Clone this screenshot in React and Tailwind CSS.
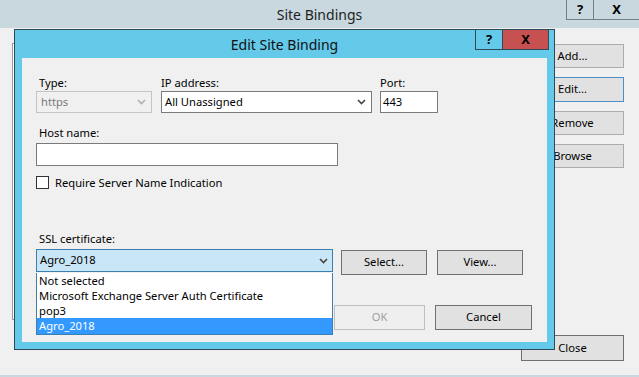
import React from "react";

function Chevron({ color = "#333" }) {
  return (
    <svg width="9" height="6" viewBox="0 0 9 6">
      <path d="M1 1 L4.5 4.5 L8 1" fill="none" stroke={color} strokeWidth="1.6" />
    </svg>
  );
}

function WinBtn({ children, className = "" }) {
  return (
    <div className={"h-[24px] w-full flex items-center justify-center border bg-[#e1e1e1] " + className}>
      {children}
    </div>
  );
}

export default function App() {
  return (
    <div className="relative w-[639px] h-[377px] overflow-hidden bg-[#f0f0f0] font-['Noto_Sans',sans-serif] text-[11.2px] text-black flex flex-col">
      {/* Outer title bar */}
      <div className="h-[28px] shrink-0 bg-[#c8d8de] flex">
        <div className="w-[73px]" />
        <div className="flex-1 flex items-center justify-center text-[14px] text-[#222] pt-[1px]">Site Bindings</div>
        <div className="flex h-[20px] w-[73px]">
          <div className="w-[28px] h-full border-l border-b border-r border-[#6f8088] flex items-center justify-center font-bold text-[13px]">?</div>
          <div className="flex-1 h-full border-b border-[#6f8088] flex items-center justify-center font-bold text-[13px]">X</div>
        </div>
      </div>

      {/* Outer body */}
      <div className="flex-1 flex pl-[12px] pt-[15px] pb-[14px]">
        <div className="w-[498px] h-[277px] border border-[#9a9a9a] bg-white" />
        <div className="ml-[11px] w-[103px] flex flex-col pt-[1px]">
          <div className="flex flex-col gap-[9px]">
            <WinBtn className="border-[#adadad]">Add...</WinBtn>
            <WinBtn className="border-[#4f8dc6] h-[25px]">Edit...</WinBtn>
            <WinBtn className="border-[#adadad]">Remove</WinBtn>
            <WinBtn className="border-[#adadad]">Browse</WinBtn>
          </div>
          <div className="mt-auto">
            <WinBtn className="border-[#707070] h-[26px]">Close</WinBtn>
          </div>
        </div>
      </div>
      <div className="h-[2px] shrink-0 bg-[#c8d8de]" />

      {/* Edit Site Binding dialog */}
      <div className="absolute left-[14px] top-[29px] w-[541px] h-[321px] border border-[#2c4a58] bg-[#65c9ea] flex flex-col pb-[7px]">
        <div className="h-[28px] shrink-0 flex">
          <div className="w-[79px]" />
          <div className="flex-1 flex items-center justify-center text-[14px] text-[#111] pt-[1px]">Edit Site Binding</div>
          <div className="w-[74px] mr-[5px] -mt-[1px] h-[21px] flex">
            <div className="w-[28px] h-full border border-[#2c4a58] flex items-center justify-center font-bold text-[13px]">?</div>
            <div className="flex-1 h-full border-t border-r border-b border-[#2c4a58] bg-[#c75050] flex items-center justify-center font-bold text-[13px]">X</div>
          </div>
        </div>

        <div className="relative flex-1 mx-[7px] bg-[#f0f0f0] pl-[14px] pt-[17px] flex flex-col">
          {/* Row 1 */}
          <div className="flex">
            <div className="w-[116px] flex flex-col">
              <span className="ml-[3px] h-[15px] leading-[15px]">Type:</span>
              <div className="mt-[1px] h-[22px] border border-[#c4c4c4] bg-[#f0f0f0] flex items-center pl-[4px] pr-[5px] text-[#7a7a7a]">
                <span className="flex-1">https</span>
                <Chevron color="#b0b0b0" />
              </div>
            </div>
            <div className="ml-[9px] w-[211px] flex flex-col">
              <span className="h-[15px] leading-[15px]">IP address:</span>
              <div className="mt-[1px] h-[22px] border border-[#7a7a7a] bg-white flex items-center pl-[3px] pr-[5px]">
                <span className="flex-1">All Unassigned</span>
                <Chevron color="#444" />
              </div>
            </div>
            <div className="ml-[8px] w-[58px] flex flex-col">
              <span className="h-[15px] leading-[15px]">Port:</span>
              <div className="mt-[1px] h-[22px] border border-[#7a7a7a] bg-white flex items-center pl-[2px]">443</div>
            </div>
          </div>

          {/* Host name */}
          <span className="mt-[12px] ml-[3px] h-[15px] leading-[15px]">Host name:</span>
          <div className="mt-[3px] w-[302px] h-[23px] border border-[#7a7a7a] bg-white" />

          {/* Checkbox */}
          <div className="mt-[10px] flex items-center h-[13px]">
            <div className="w-[13px] h-[13px] border border-[#333] bg-white" />
            <span className="ml-[6px] leading-[15px]">Require Server Name Indication</span>
          </div>

          {/* SSL */}
          <span className="mt-[42px] ml-[3px] h-[15px] leading-[15px]">SSL certificate:</span>
          <div className="mt-[3px] flex items-start">
            <div className="w-[297px] h-[23px] border border-[#3c7fb1] bg-[#c9e6f7] flex items-center pl-[3px] pr-[4px]">
              <span className="flex-1">Agro_2018</span>
              <Chevron color="#444" />
            </div>
            <div className="ml-[8px] mt-[1px] w-[86px] h-[25px] border border-[#707070] bg-[#e1e1e1] flex items-center justify-center">Select...</div>
            <div className="ml-[10px] mt-[1px] w-[86px] h-[25px] border border-[#707070] bg-[#e1e1e1] flex items-center justify-center">View...</div>
          </div>

          {/* OK / Cancel */}
          <div className="mt-[30px] flex justify-end pr-[15px]">
            <div className="w-[91px] h-[25px] border border-[#bfbfbf] bg-[#efefef] text-[#a0a0a0] flex items-center justify-center">OK</div>
            <div className="ml-[10px] w-[97px] h-[25px] border border-[#707070] bg-[#e1e1e1] flex items-center justify-center">Cancel</div>
          </div>

          {/* Dropdown list (overlay) */}
          <div className="absolute left-[14px] top-[215px] w-[297px] h-[62px] bg-white border-l border-r border-b border-[#3c7fb1] flex flex-col">
            <div className="h-[15px] leading-[15px] pl-[2px]">Not selected</div>
            <div className="h-[15px] leading-[15px] pl-[2px]">Microsoft Exchange Server Auth Certificate</div>
            <div className="h-[15px] leading-[15px] pl-[2px]">pop3</div>
            <div className="h-[16px] leading-[16px] pl-[2px] bg-[#3399ff] text-white">Agro_2018</div>
          </div>
        </div>
      </div>
    </div>
  );
}
